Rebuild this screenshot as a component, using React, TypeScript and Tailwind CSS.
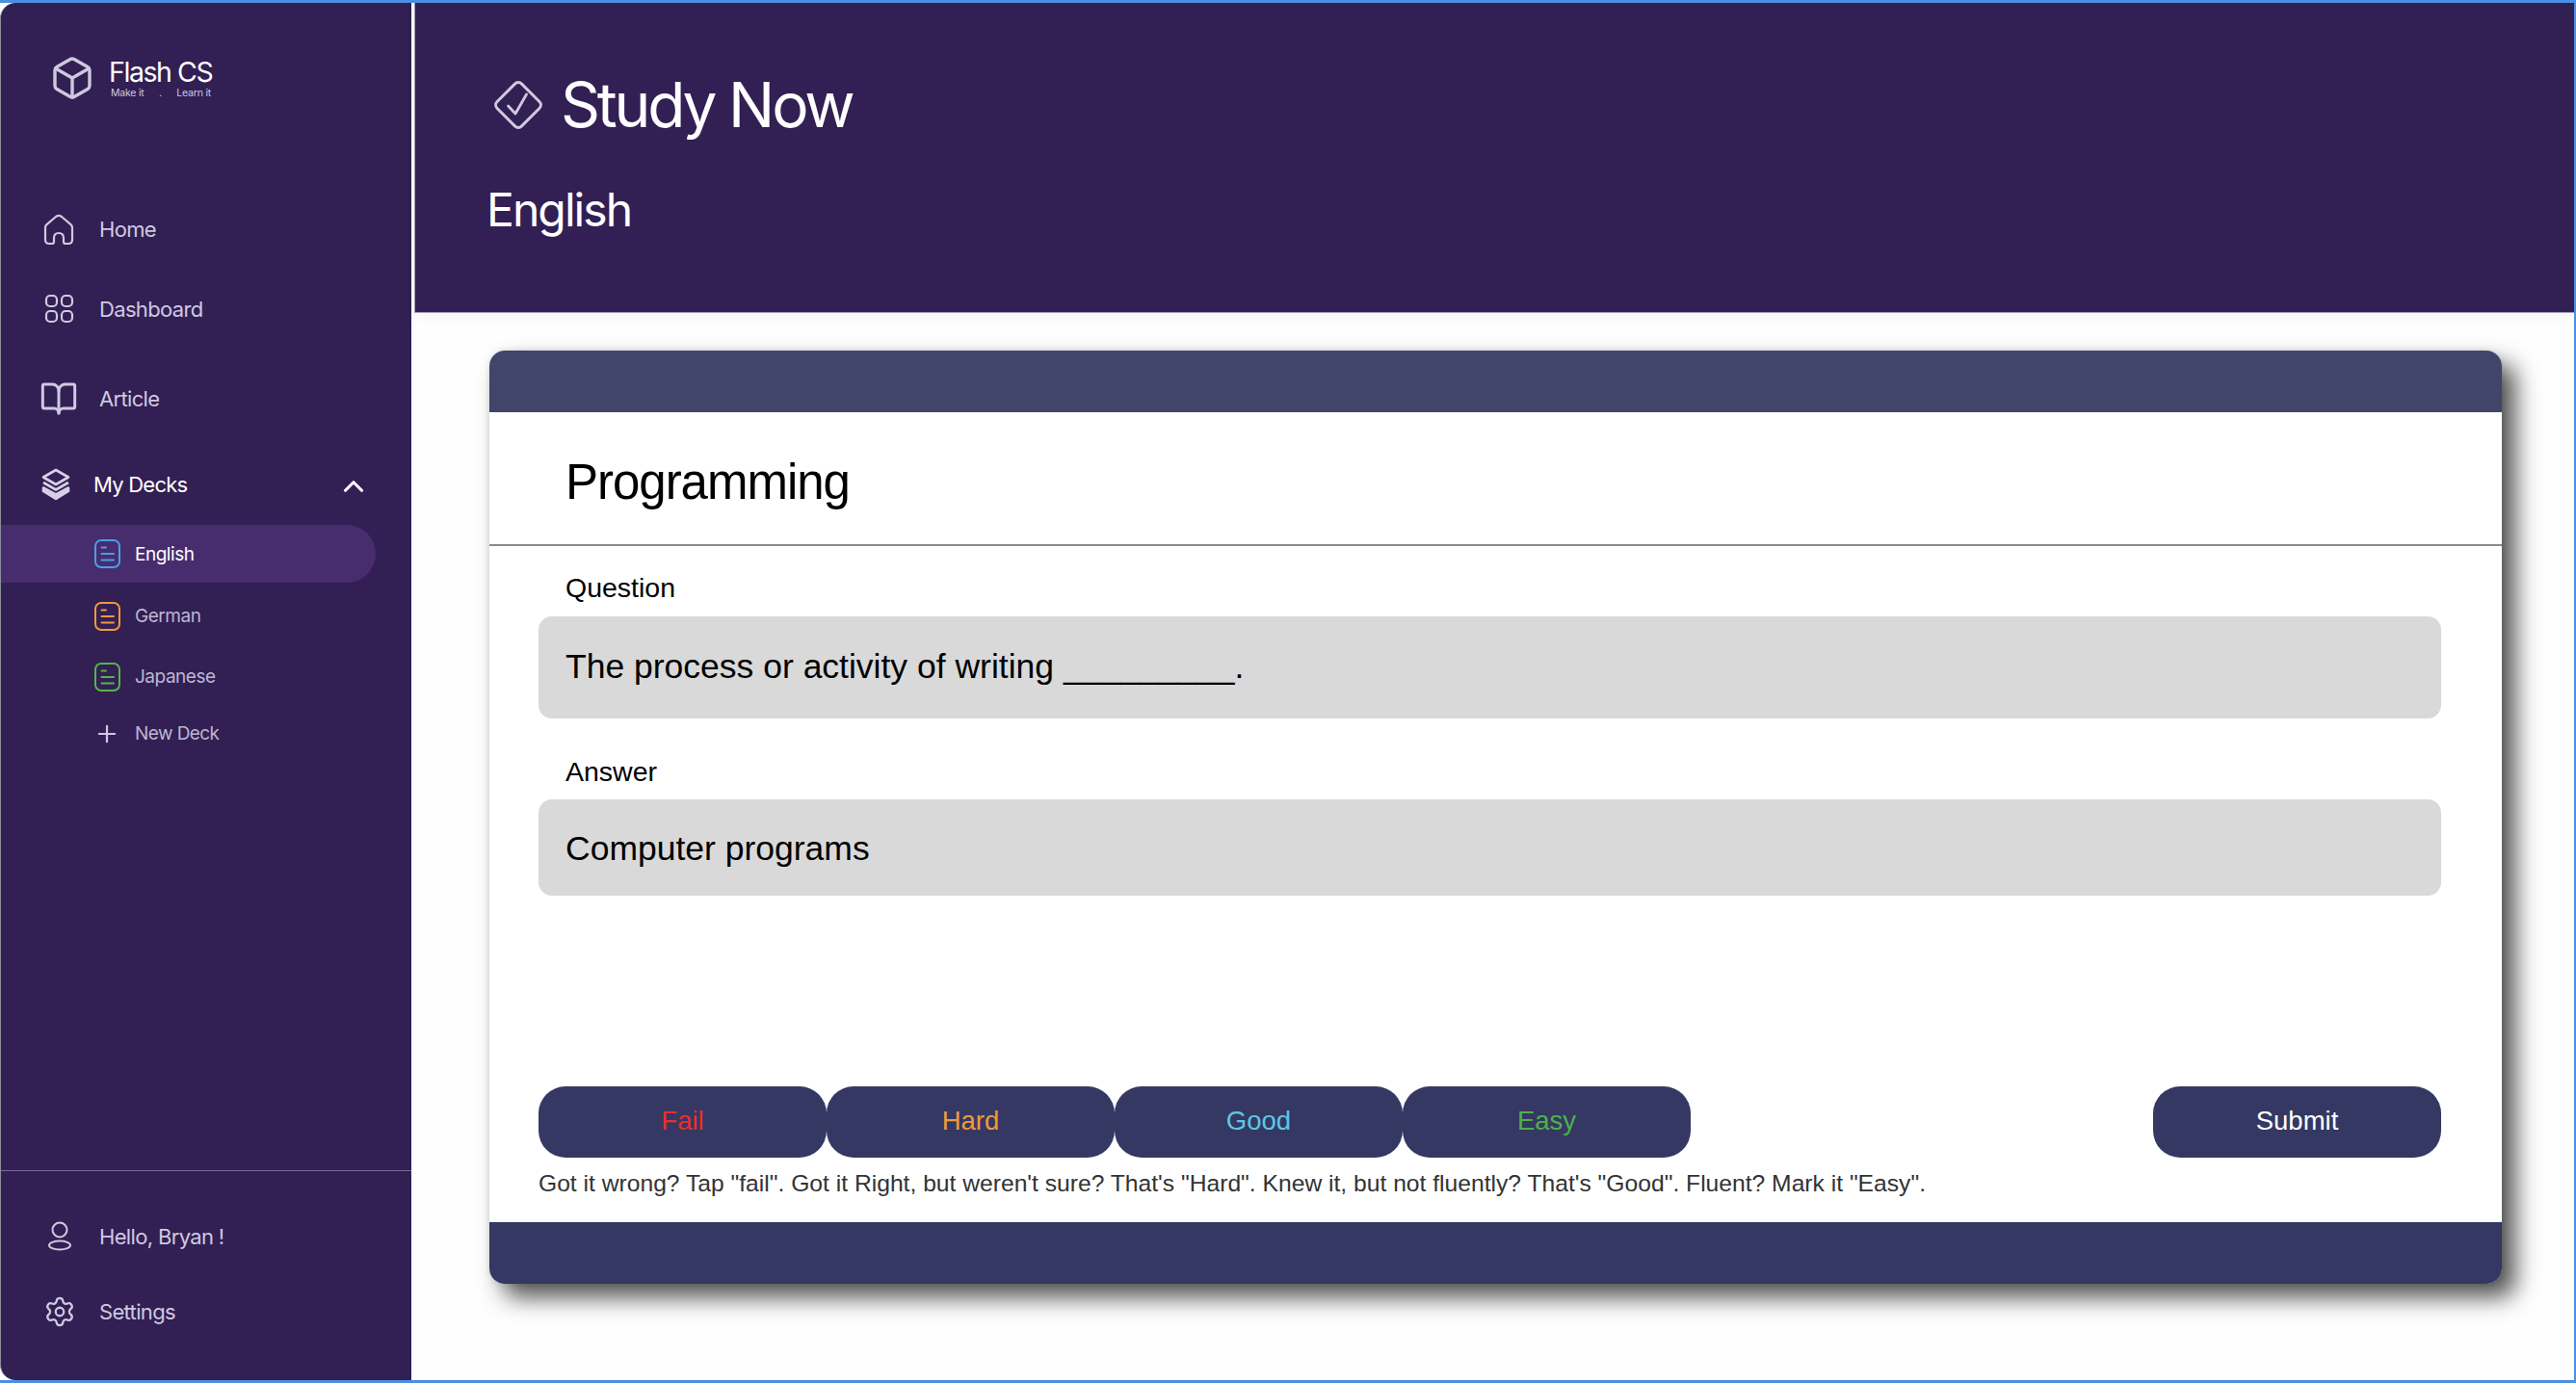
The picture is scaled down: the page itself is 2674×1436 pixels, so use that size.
import type { ReactNode } from "react";
import { BookOpen, Box, ChevronUp, Plus, Settings } from "lucide-react";

const INTER = "font-['Inter',sans-serif]";
const HELV = "font-['Liberation_Sans',Arial,sans-serif]";

function HomeIcon() {
  return (
    <svg width="32" height="33" viewBox="0 0 32 33" fill="none" stroke="#cfc9e0" strokeWidth="2.2">
      <path d="M2 14.5Q2 12.5 3.5 11.2L13 3Q16 .8 19 3L28.5 11.2Q30 12.5 30 14.5V27Q30 31 26 31H23Q21 31 21 29V25Q21 20 16 20Q11 20 11 25V29Q11 31 9 31H6Q2 31 2 27Z" />
    </svg>
  );
}

function GridIcon() {
  return (
    <svg width="32" height="32" viewBox="0 0 32 32" fill="none" stroke="#cfc9e0" strokeWidth="2.2">
      <rect x="3" y="2" width="11" height="11" rx="4" />
      <rect x="19" y="2" width="11" height="11" rx="4" />
      <rect x="3" y="18" width="11" height="11" rx="4" />
      <rect x="19" y="18" width="11" height="11" rx="4" />
    </svg>
  );
}

function LayersIcon() {
  return (
    <svg width="32" height="34" viewBox="0 0 32 34" fill="none" stroke="#d6d0e6" strokeWidth="2.6" strokeLinejoin="round">
      <path d="M16 2L29 9.500L16 17L3 9.500Z" />
      <path d="M3 15L16 22.500L29 15" />
      <path d="M3 20.500L16 27.500L29 20.500V24L16 32L3 24Z" fill="#d6d0e6" />
    </svg>
  );
}

function DeckIcon({ color }: { color: string }) {
  return (
    <svg width="27" height="30" viewBox="0 0 27 30" fill="none" stroke={color} strokeWidth="2" strokeLinecap="round">
      <rect x="1" y="1" width="25" height="28" rx="6" />
      <path d="M7.500 8.500H12" />
      <path d="M7.500 15H20" />
      <path d="M7.500 21.500H20" />
    </svg>
  );
}

function UserIcon() {
  return (
    <svg width="26" height="32" viewBox="0 0 26 32" fill="none" stroke="#cfc9e0" strokeWidth="2">
      <circle cx="13" cy="9" r="7.500" />
      <ellipse cx="13" cy="25" rx="11" ry="4.500" />
    </svg>
  );
}

function StudyIcon() {
  return (
    <svg width="54" height="54" viewBox="0 0 54 54" fill="none" stroke="#cfc9e0" strokeWidth="3" strokeLinecap="round" strokeLinejoin="round">
      <rect x="9" y="9" width="36" height="36" rx="5" transform="rotate(45 27 27)" />
      <path d="M16.500 28L24 36L35.500 16" strokeWidth="2.800" />
    </svg>
  );
}

function NavRow({ icon, label, className }: { icon: ReactNode; label: string; className: string }) {
  return (
    <div className={`flex h-[60px] items-center ${className}`}>
      <div className="flex w-[58px] shrink-0 items-center">{icon}</div>
      <span className="text-[22px] tracking-[-0.03em] text-[#cfc9e0]">{label}</span>
    </div>
  );
}

function DeckRow({ color, label, className }: { color: string; label: string; className: string }) {
  return (
    <div className={`flex h-[56px] items-center pl-[97px] ${className}`}>
      <DeckIcon color={color} />
      <span className="ml-[15px] mt-[1px] text-[19px] tracking-[-0.025em] text-[#bdb6d2]">{label}</span>
    </div>
  );
}

function GradeButton({ label, color }: { label: string; color: string }) {
  return (
    <button type="button" className={`h-[74px] w-[299px] rounded-[28px] bg-[#343863] pb-[2px] text-[27.500px] ${color}`}>
      {label}
    </button>
  );
}

export default function App() {
  return (
    <div className={`flex h-[1436px] w-full overflow-hidden border-y-[3px] border-r-[2px] border-[#4a90e2] bg-[#fefefe] ${INTER}`}>
      <aside className="flex w-[427px] shrink-0 flex-col rounded-l-[16px] border-l border-[#8d8d9c] bg-[#321f53]">
        <div className="flex h-[205px] items-start pl-[54px] pt-[54px]">
          <Box size={48} strokeWidth={1.7} color="#cfc9e0" className="-ml-[4px]" />
          <div className="ml-[14px] flex flex-col">
            <span className="text-[28.500px] leading-[36px] tracking-[-0.05em] text-white">Flash CS</span>
            <span className="-mt-[2px] flex w-[106px] justify-between text-[10.500px] leading-[12px] tracking-[-0.02em] text-[#cfc9e0]">
              <span className="ml-[2px]">Make it</span>
              <span>.</span>
              <span className="mr-[0px]">Learn it</span>
            </span>
          </div>
        </div>

        <NavRow icon={<HomeIcon />} label="Home" className="pl-[44px]" />
        <NavRow icon={<GridIcon />} label="Dashboard" className="mt-[23px] pl-[44px]" />
        <NavRow icon={<BookOpen size={40} strokeWidth={1.8} color="#cfc9e0" className="-ml-[4px]" />} label="Article" className="mt-[33px] pl-[44px]" />

        <div className="mt-[29px] flex h-[60px] items-center pl-[41px] pr-[49px]">
          <LayersIcon />
          <span className="ml-[23px] text-[22px] tracking-[-0.035em] text-white">My Decks</span>
          <ChevronUp size={34} strokeWidth={2.2} color="#fff" className="ml-auto mt-[3px] -mr-[6px]" />
        </div>

        <div className="mt-[12px] flex h-[60px] w-[389px] items-center rounded-r-full bg-[#472d6e] pl-[97px]">
          <DeckIcon color="#4a9fe8" />
          <span className="ml-[15px] mt-[2px] text-[19px] tracking-[-0.025em] text-white">English</span>
        </div>
        <DeckRow color="#ef9a3c" label="German" className="mt-[7px]" />
        <DeckRow color="#55b54a" label="Japanese" className="mt-[7px]" />
        <div className="mt-[3px] flex h-[56px] items-center pl-[96px]">
          <Plus size={28} strokeWidth={1.9} color="#cfc9e0" />
          <span className="ml-[15px] text-[19px] tracking-[-0.03em] text-[#bdb6d2]">New Deck</span>
        </div>

        <div className="mt-auto border-t-[1.500px] border-[#7b6c94] pb-[41px]">
          <NavRow icon={<UserIcon />} label="Hello, Bryan !" className="mt-[38px] pl-[48px] [&>div]:w-[54px]" />
          <NavRow icon={<Settings size={34} strokeWidth={1.6} color="#cfc9e0" />} label="Settings" className="mt-[18px] pl-[44px]" />
        </div>
      </aside>

      <main className="ml-[3px] flex min-w-0 flex-1 flex-col">
        <header className="h-[322px] shrink-0 border-b border-l border-[#a79fbc] bg-[#321f53] pl-[74px] pt-[66px] shadow-[0_2px_12px_rgba(0,0,0,0.06)]">
          <div className="flex h-[80px] items-center pl-[6px]">
            <StudyIcon />
            <h1 className="ml-[17px] text-[64px] leading-[80px] tracking-[-0.05em] text-white">Study Now</h1>
          </div>
          <h2 className="mt-[39px] text-[48px] leading-[60px] tracking-[-0.04em] text-white">English</h2>
        </header>

        <section className={`ml-[78px] mt-[39px] flex h-[969px] w-[2089px] flex-col rounded-[16px] bg-white shadow-[14px_14px_24px_rgba(0,0,0,0.68),0_0_6px_rgba(0,0,0,0.12)] ${HELV}`}>
          <div className="h-[64px] shrink-0 rounded-t-[16px] bg-[#41456a]" />
          <div className="flex h-[137px] shrink-0 items-center pl-[79px] pt-[9px] text-[51px] tracking-[-0.02em] text-black">Programming</div>
          <div className="h-[2px] shrink-0 bg-[#8a8a8a]" />

          <div className="flex flex-1 flex-col pl-[51px] pr-[63px]">
            <div className="pl-[28px] pt-[26px] text-[28.500px] leading-[34px] text-black">Question</div>
            <div className="mt-[13px] flex h-[106px] items-center rounded-[14px] bg-[#d9d9d9] pl-[28px] text-[35.500px] text-black">
              The process or activity of writing _________.
            </div>

            <div className="mt-[38px] pl-[28px] text-[28.500px] leading-[34px] text-black">Answer</div>
            <div className="mt-[12px] flex h-[100px] items-center rounded-[14px] bg-[#d9d9d9] pl-[28px] pt-[4px] text-[35.500px] text-black">
              Computer programs
            </div>

            <div className="mt-[198px] flex justify-between">
              <div className="flex">
                <GradeButton label="Fail" color="text-[#e8302a]" />
                <GradeButton label="Hard" color="text-[#f09a3a]" />
                <GradeButton label="Good" color="text-[#5cc8e2]" />
                <GradeButton label="Easy" color="text-[#4fb04a]" />
              </div>
              <GradeButton label="Submit" color="text-white" />
            </div>
            <p className="mt-[12px] text-[24.650px] leading-[30px] text-[#333]">
              Got it wrong? Tap "fail". Got it Right, but weren't sure? That's "Hard". Knew it, but not fluently? That's "Good". Fluent? Mark it "Easy".
            </p>
          </div>

          <div className="h-[64px] shrink-0 rounded-b-[16px] bg-[#343863]" />
        </section>
      </main>
    </div>
  );
}
